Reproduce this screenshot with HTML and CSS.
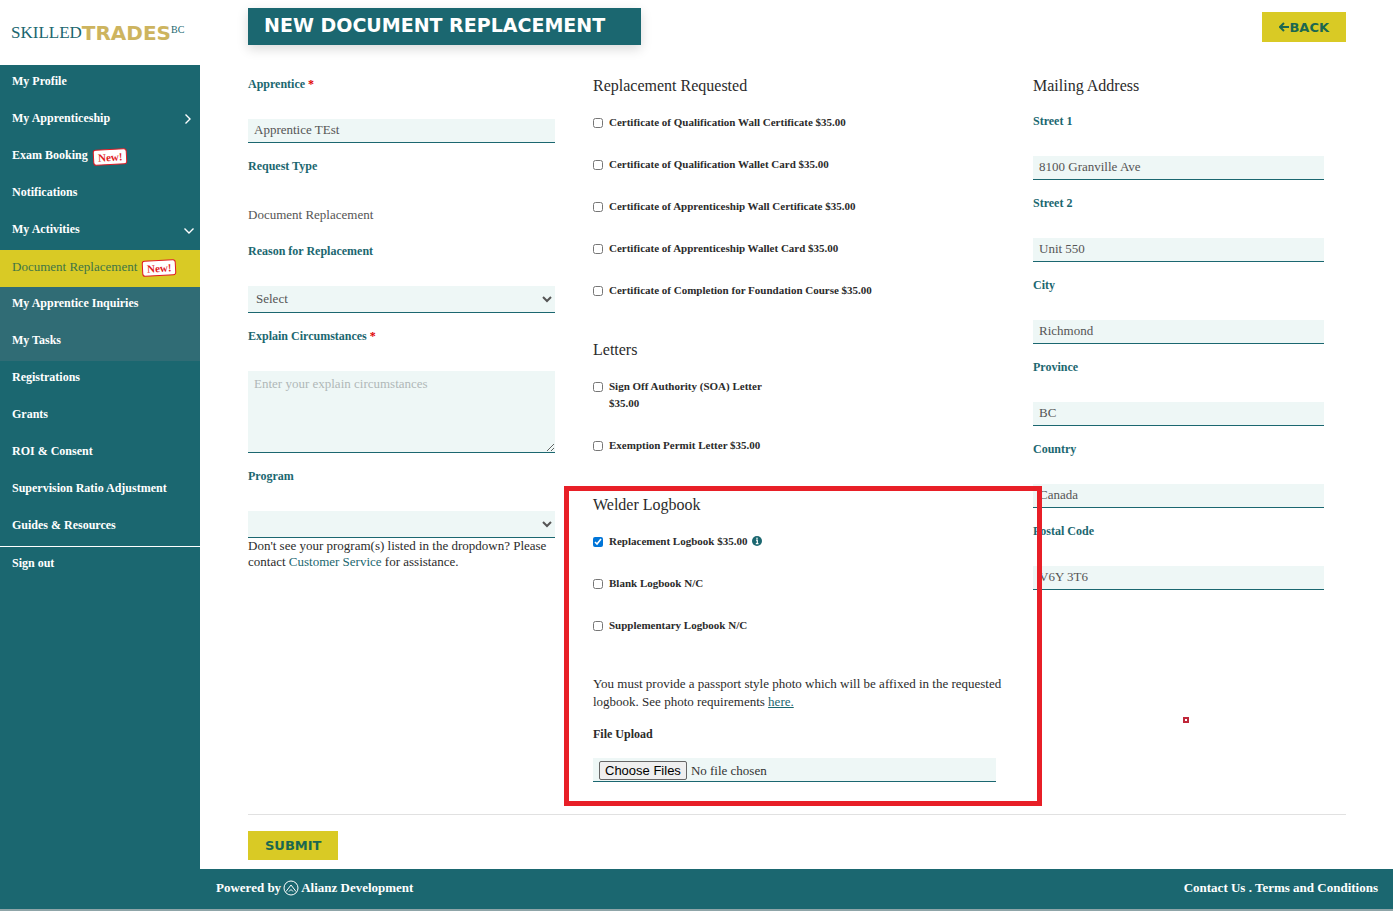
FILE: index.html
```html
<!DOCTYPE html>
<html lang="en">
<head>
    <meta charset="UTF-8">
    <meta name="viewport" content="width=device-width, initial-scale=1.0">
    <link rel="stylesheet" href="styles.css">
    <title>New Document Replacement</title>
</head>
<body>
    <div class="page">
        <aside class="sidebar">
            <a href="#" class="logo"><span class="skilled">SKILLED</span><span class="trades">TRADES</span><span class="bc">BC</span></a>
            <nav class="menu">
                <a href="#">My Profile</a>
                <a href="#">My Apprenticeship
                    <svg class="arrow" width="10" height="10" viewBox="0 0 10 10"><path d="M1.5 0.5L6 5L1.5 9.5"/></svg>
                </a>
                <a href="#">Exam Booking <span class="new">New!</span></a>
                <a href="#">Notifications</a>
                <a href="#">My Activities
                    <svg class="arrow" width="10" height="10" viewBox="0 0 10 10"><path d="M0.5 3.5L5 8L9.5 3.5"/></svg>
                </a>
                <div class="submenu">
                    <a href="#" class="active">Document Replacement <span class="new">New!</span></a>
                    <a href="#">My Apprentice Inquiries</a>
                    <a href="#">My Tasks</a>
                </div>
                <a href="#">Registrations</a>
                <a href="#">Grants</a>
                <a href="#">ROI &amp; Consent</a>
                <a href="#">Supervision Ratio Adjustment</a>
                <a href="#">Guides &amp; Resources</a>
                <a href="#" class="signout">Sign out</a>
            </nav>
        </aside>

        <div class="content">
            <form class="main">
                <header class="top">
                    <h1>NEW DOCUMENT REPLACEMENT</h1>
                    <button type="button" class="btn back">
                        <svg width="10" height="10" viewBox="0 0 10 10"><path d="M10 5H1.5M5 1L1 5L5 9"/></svg>BACK
                    </button>
                </header>

                <div class="columns">
                    <section class="request">
                        <div class="field">
                            <label for="apprentice">Apprentice <span class="req">*</span></label>
                            <input type="text" id="apprentice" value="Apprentice TEst">
                        </div>
                        <div class="field">
                            <label for="type">Request Type</label>
                            <output id="type">Document Replacement</output>
                        </div>
                        <div class="field">
                            <label for="reason">Reason for Replacement</label>
                            <select id="reason"><option>Select</option></select>
                        </div>
                        <div class="field">
                            <label for="explain">Explain Circumstances <span class="req">*</span></label>
                            <textarea id="explain" placeholder="Enter your explain circumstances"></textarea>
                        </div>
                        <div class="field">
                            <label for="program">Program</label>
                            <select id="program"><option></option></select>
                            <p class="hint">Don't see your program(s) listed in the dropdown? Please contact <a href="#">Customer Service</a> for assistance.</p>
                        </div>
                    </section>

                    <section class="documents">
                        <div class="group">
                            <h2>Replacement Requested</h2>
                            <label class="check"><input type="checkbox"><span>Certificate of Qualification Wall Certificate $35.00</span></label>
                            <label class="check"><input type="checkbox"><span>Certificate of Qualification Wallet Card $35.00</span></label>
                            <label class="check"><input type="checkbox"><span>Certificate of Apprenticeship Wall Certificate $35.00</span></label>
                            <label class="check"><input type="checkbox"><span>Certificate of Apprenticeship Wallet Card $35.00</span></label>
                            <label class="check"><input type="checkbox"><span>Certificate of Completion for Foundation Course $35.00</span></label>
                        </div>
                        <div class="group">
                            <h2>Letters</h2>
                            <label class="check"><input type="checkbox"><span>Sign Off Authority (SOA) Letter<br>$35.00</span></label>
                            <label class="check"><input type="checkbox"><span>Exemption Permit Letter $35.00</span></label>
                        </div>
                        <div class="group logbook">
                            <h2>Welder Logbook</h2>
                            <label class="check"><input type="checkbox" checked><span>Replacement Logbook $35.00
                                <svg class="info" width="10" height="10" viewBox="0 0 10 10"><circle cx="5" cy="5" r="5" fill="#1b6770"/><path d="M4 4.2H5.3V7.5M3.8 7.6H6.5" stroke="#fff" stroke-width="1.2" fill="none"/><circle cx="5" cy="2.3" r="0.8" fill="#fff"/></svg>
                            </span></label>
                            <label class="check"><input type="checkbox"><span>Blank Logbook N/C</span></label>
                            <label class="check"><input type="checkbox"><span>Supplementary Logbook N/C</span></label>
                            <p class="photo">You must provide a passport style photo which will be affixed in the requested logbook. See photo requirements <a href="#">here.</a></p>
                            <label for="upload" class="upload-label">File Upload</label>
                            <input type="file" id="upload" class="upload" multiple>
                        </div>
                    </section>

                    <section class="address">
                        <h2>Mailing Address</h2>
                        <div class="field">
                            <label for="street1">Street 1</label>
                            <input type="text" id="street1" value="8100 Granville Ave">
                        </div>
                        <div class="field">
                            <label for="street2">Street 2</label>
                            <input type="text" id="street2" value="Unit 550">
                        </div>
                        <div class="field">
                            <label for="city">City</label>
                            <input type="text" id="city" value="Richmond">
                        </div>
                        <div class="field">
                            <label for="province">Province</label>
                            <input type="text" id="province" value="BC">
                        </div>
                        <div class="field">
                            <label for="country">Country</label>
                            <input type="text" id="country" value="Canada">
                        </div>
                        <div class="field">
                            <label for="postal">Postal Code</label>
                            <input type="text" id="postal" value="V6Y 3T6">
                        </div>
                        <span class="marker"></span>
                    </section>
                </div>

                <div class="actions">
                    <button type="submit" class="btn">SUBMIT</button>
                </div>
            </form>

            <footer class="footer">
                <div class="powered">Powered by
                    <svg width="16" height="16" viewBox="0 0 16 16"><circle cx="8" cy="8" r="7"/><path d="M3 11.5L8 5L13 11.5"/><path d="M6 11.5L8 9.5L10 11.5"/></svg>
                    <a href="#">Alianz Development</a>
                </div>
                <div><a href="#">Contact Us</a> . <a href="#">Terms and Conditions</a></div>
            </footer>
        </div>
    </div>
</body>
</html>
```
FILE: styles.css
```css
*{
    margin:0px;
    padding:0px;
    box-sizing: border-box;
}
body{
    font-family: "Liberation Serif", "Times New Roman", serif;
    font-size: 13px;
    color: #2b2b2b;
    background-color: #fff;
}
a{
    color: #1b6770;
    text-decoration: none;
}
.page{
    display: flex;
    min-height: 100vh;
    border-bottom: 2px solid #8fa5a8;
}

/* sidebar */
.sidebar{
    display: flex;
    flex-direction: column;
    flex: none;
    width: 200px;
}
.logo{
    display: flex;
    align-items: center;
    height: 65px;
    padding-left: 11px;
    line-height: 20px;
}
.skilled{
    font-size: 17px;
}
.trades{
    font-family: "DejaVu Sans", sans-serif;
    font-size: 20px;
    font-weight: bold;
    color: #cdb45f;
}
.bc{
    font-size: 10px;
    line-height: 10px;
    align-self: flex-start;
    margin-top: 25px;
}
.menu{
    flex: 1;
    background-color: #1b6770;
}
.menu a{
    display: flex;
    align-items: center;
    height: 37px;
    padding: 0px 6px 4px 12px;
    font-size: 12px;
    font-weight: bold;
    color: #fff;
}
.arrow{
    margin-left: auto;
    fill: none;
    stroke: #fff;
    stroke-width: 1.4;
}
.submenu{
    background-color: #306c75;
}
.menu .active{
    font-size: 13px;
    font-weight: normal;
    color: #3f7546;
    background-color: #d9ca25;
}
.menu .signout{
    height: 38px;
    border-top: 1px solid #fff;
}
.new{
    margin: 3px 0px 0px 5px;
    padding: 0px 4px;
    border: 1px solid #e01b24;
    border-radius: 3px;
    font-size: 11px;
    font-weight: bold;
    line-height: 14px;
    color: #e01b24;
    background-color: #fff;
    transform: rotate(-3deg);
}

/* page head */
.content{
    flex: 1;
    display: flex;
    flex-direction: column;
}
.main{
    flex: 1;
    padding: 8px 47px 9px 48px;
}
.top{
    display: flex;
    justify-content: space-between;
    align-items: flex-start;
    margin-bottom: 30px;
}
h1{
    padding: 0px 36px 3px 16px;
    font-family: "DejaVu Sans", sans-serif;
    font-size: 19px;
    line-height: 34px;
    color: #fff;
    background-color: #1b6770;
    box-shadow: 0px 4px 12px rgba(0,0,0,0.15);
}
.btn{
    height: 29px;
    padding: 0px 17px;
    border: none;
    font-family: "DejaVu Sans", sans-serif;
    font-size: 13px;
    font-weight: bold;
    color: #1b6750;
    background-color: #d9ca25;
    cursor: pointer;
}
.back{
    display: flex;
    align-items: center;
    height: 30px;
    margin-top: 4px;
}
.back svg{
    fill: none;
    stroke: #1b6750;
    stroke-width: 2;
}

/* form */
.columns{
    display: grid;
    grid-template-columns: 345fr 440fr 313fr;
    padding-bottom: 32px;
    border-bottom: 1px solid #e1e1e1;
}
.request{
    padding-right: 38px;
}
.documents{
    padding-right: 16px;
}
.address{
    position: relative;
    padding-right: 22px;
}
h2{
    margin-bottom: 17px;
    font-size: 16px;
    font-weight: normal;
    line-height: 22px;
}
.address h2{
    margin-bottom: 15px;
}
.field{
    margin-bottom: 14px;
}
.field label{
    display: block;
    margin-bottom: 26px;
    font-size: 12px;
    font-weight: bold;
    line-height: 18px;
    color: #1b6770;
}
.req{
    color: #e00000;
}
.field input, .field select, .field textarea, .upload{
    display: block;
    width: 100%;
    height: 24px;
    padding: 0px 6px 2px 6px;
    border: none;
    border-bottom: 1px solid #1b6770;
    border-radius: 0px;
    font-family: inherit;
    font-size: 13px;
    color: #555;
    background-color: #eef7f6;
}
.field select{
    height: 27px;
    padding: 0px 4px 2px;
}
.field textarea{
    height: 82px;
    padding-top: 5px;
}
.field textarea::placeholder{
    color: #b0b8b8;
}
.field output{
    display: block;
    line-height: 27px;
    color: #555;
}
.hint{
    line-height: 16px;
}
.group{
    margin-bottom: 40px;
}
.check{
    display: flex;
    align-items: flex-start;
    gap: 6px;
    margin-bottom: 25px;
    font-size: 11px;
    font-weight: bold;
    line-height: 17px;
}
.check input{
    width: 10px;
    height: 10px;
    margin-top: 4px;
    accent-color: #0075d8;
}
.info{
    margin-left: 2px;
    vertical-align: -1px;
}
.logbook{
    position: relative;
    margin-bottom: 0px;
}
/* red frame drawn over the logbook group */
.logbook::after{
    content: "";
    position: absolute;
    z-index: 1;
    top: -8px;
    right: -25px;
    bottom: -24px;
    left: -29px;
    border: 5px solid #e81f27;
    pointer-events: none;
}
.photo{
    margin: 41px 0px 15px;
    line-height: 18px;
}
.photo a{
    text-decoration: underline;
}
.upload-label{
    display: block;
    margin-bottom: 15px;
    font-size: 12px;
    font-weight: bold;
    line-height: 17px;
}
.upload{
    width: 95%;
    padding: 3px 6px 0px;
    color: #333;
}
.upload::file-selector-button{
    height: 19px;
    padding: 0px 5px;
    border: 1px solid #666;
    border-radius: 2px;
    font-family: "Liberation Sans", Arial, sans-serif;
    font-size: 13px;
    color: #000;
    background-color: #efefef;
}
.marker{
    position: absolute;
    left: 150px;
    bottom: 59px;
    width: 6px;
    height: 6px;
    border: 2px solid #c0283a;
}
.actions{
    padding-top: 16px;
}

.footer{
    display: flex;
    justify-content: space-between;
    align-items: center;
    height: 40px;
    padding: 0px 15px 2px 16px;
    font-size: 13px;
    font-weight: bold;
    color: #fff;
    background-color: #1b6770;
}
.footer a{
    color: #fff;
}
.powered{
    display: flex;
    align-items: center;
    gap: 2px;
}
.powered svg{
    fill: none;
    stroke: #fff;
}
```
